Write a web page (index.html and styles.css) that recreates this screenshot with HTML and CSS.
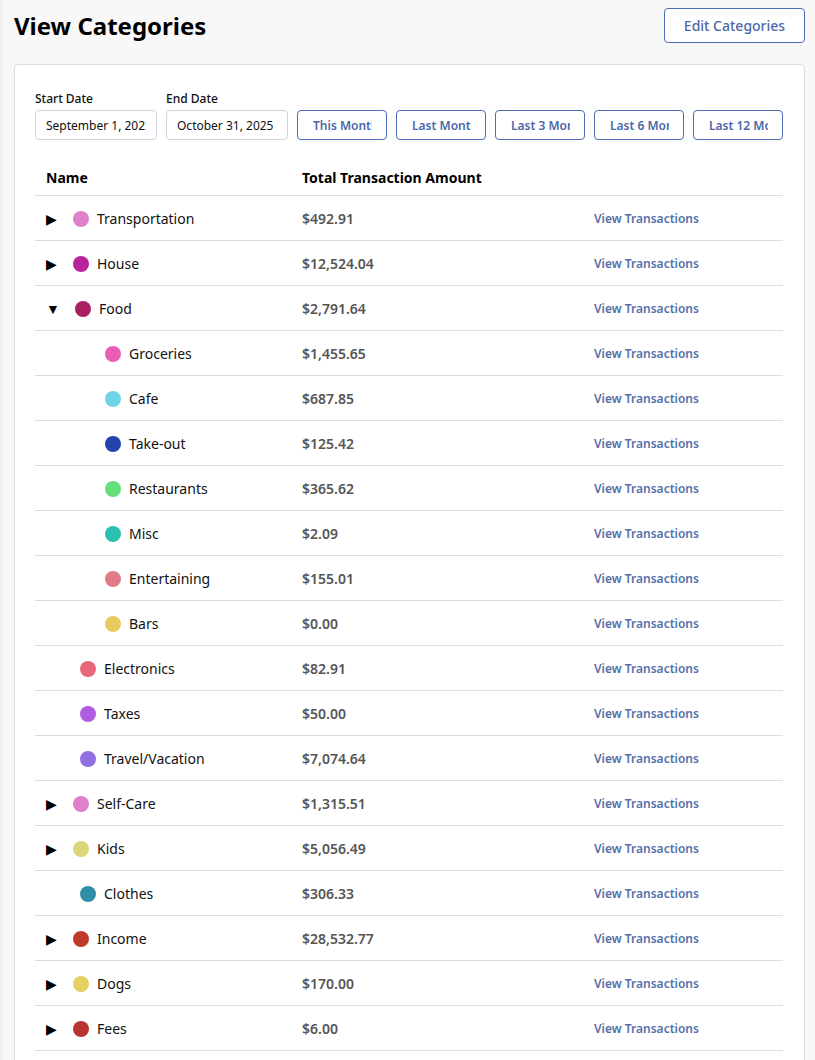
FILE: index.html
```html
<!DOCTYPE html>
<html lang="en">
<head>
<meta charset="utf-8">
<title>View Categories</title>
<link rel="stylesheet" href="styles.css">
</head>
<body>
<div class="page">
  <header class="page-header">
    <h1 class="title">View Categories</h1>
    <button class="btn-outline edit-btn">Edit Categories</button>
  </header>

  <section class="card">
    <div class="controls">
      <label class="field">
        <span class="field-label">Start Date</span>
        <input class="date-input" type="text" value="September 1, 2025">
      </label>
      <label class="field">
        <span class="field-label">End Date</span>
        <input class="date-input" type="text" value="October 31, 2025">
      </label>
      <button class="btn-outline range-btn"><span class="btn-text">This Month</span></button>
      <button class="btn-outline range-btn"><span class="btn-text">Last Month</span></button>
      <button class="btn-outline range-btn"><span class="btn-text">Last 3 Months</span></button>
      <button class="btn-outline range-btn"><span class="btn-text">Last 6 Months</span></button>
      <button class="btn-outline range-btn"><span class="btn-text">Last 12 Months</span></button>
    </div>

    <table class="cat-table">
      <colgroup>
        <col class="col-name">
        <col class="col-amount">
        <col class="col-action">
      </colgroup>
      <thead>
        <tr>
          <th>Name</th>
          <th>Total Transaction Amount</th>
          <th></th>
        </tr>
      </thead>
      <tbody>
        <tr><td><div class="name lvl-arrow"><span class="toggle">▶</span><span class="dot" style="background:#e07fcb"></span>Transportation</div></td><td class="amount">$492.91</td><td class="action"><a class="link">View Transactions</a></td></tr>
        <tr><td><div class="name lvl-arrow"><span class="toggle">▶</span><span class="dot" style="background:#b8249e"></span>House</div></td><td class="amount">$12,524.04</td><td class="action"><a class="link">View Transactions</a></td></tr>
        <tr><td><div class="name lvl-arrow"><span class="toggle open">▼</span><span class="dot" style="background:#a92060"></span>Food</div></td><td class="amount">$2,791.64</td><td class="action"><a class="link">View Transactions</a></td></tr>
        <tr><td><div class="name lvl-child"><span class="dot" style="background:#e85eb5"></span>Groceries</div></td><td class="amount">$1,455.65</td><td class="action"><a class="link">View Transactions</a></td></tr>
        <tr><td><div class="name lvl-child"><span class="dot" style="background:#6dd5e6"></span>Cafe</div></td><td class="amount">$687.85</td><td class="action"><a class="link">View Transactions</a></td></tr>
        <tr><td><div class="name lvl-child"><span class="dot" style="background:#2543a8"></span>Take-out</div></td><td class="amount">$125.42</td><td class="action"><a class="link">View Transactions</a></td></tr>
        <tr><td><div class="name lvl-child"><span class="dot" style="background:#64e07a"></span>Restaurants</div></td><td class="amount">$365.62</td><td class="action"><a class="link">View Transactions</a></td></tr>
        <tr><td><div class="name lvl-child"><span class="dot" style="background:#2bbfb0"></span>Misc</div></td><td class="amount">$2.09</td><td class="action"><a class="link">View Transactions</a></td></tr>
        <tr><td><div class="name lvl-child"><span class="dot" style="background:#e07c8a"></span>Entertaining</div></td><td class="amount">$155.01</td><td class="action"><a class="link">View Transactions</a></td></tr>
        <tr><td><div class="name lvl-child"><span class="dot" style="background:#e6cc5e"></span>Bars</div></td><td class="amount">$0.00</td><td class="action"><a class="link">View Transactions</a></td></tr>
        <tr><td><div class="name lvl-leaf"><span class="dot" style="background:#e8687a"></span>Electronics</div></td><td class="amount">$82.91</td><td class="action"><a class="link">View Transactions</a></td></tr>
        <tr><td><div class="name lvl-leaf"><span class="dot" style="background:#b05ce0"></span>Taxes</div></td><td class="amount">$50.00</td><td class="action"><a class="link">View Transactions</a></td></tr>
        <tr><td><div class="name lvl-leaf"><span class="dot" style="background:#9070e0"></span>Travel/Vacation</div></td><td class="amount">$7,074.64</td><td class="action"><a class="link">View Transactions</a></td></tr>
        <tr><td><div class="name lvl-arrow"><span class="toggle">▶</span><span class="dot" style="background:#e07fcb"></span>Self-Care</div></td><td class="amount">$1,315.51</td><td class="action"><a class="link">View Transactions</a></td></tr>
        <tr><td><div class="name lvl-arrow"><span class="toggle">▶</span><span class="dot" style="background:#dcd67a"></span>Kids</div></td><td class="amount">$5,056.49</td><td class="action"><a class="link">View Transactions</a></td></tr>
        <tr><td><div class="name lvl-leaf"><span class="dot" style="background:#2f8fa8"></span>Clothes</div></td><td class="amount">$306.33</td><td class="action"><a class="link">View Transactions</a></td></tr>
        <tr><td><div class="name lvl-arrow"><span class="toggle">▶</span><span class="dot" style="background:#c03a2a"></span>Income</div></td><td class="amount">$28,532.77</td><td class="action"><a class="link">View Transactions</a></td></tr>
        <tr><td><div class="name lvl-arrow"><span class="toggle">▶</span><span class="dot" style="background:#e6d060"></span>Dogs</div></td><td class="amount">$170.00</td><td class="action"><a class="link">View Transactions</a></td></tr>
        <tr><td><div class="name lvl-arrow"><span class="toggle">▶</span><span class="dot" style="background:#b83232"></span>Fees</div></td><td class="amount">$6.00</td><td class="action"><a class="link">View Transactions</a></td></tr>
        <tr><td><div class="name lvl-arrow"><span class="toggle">▶</span><span class="dot" style="background:#7a7a7a"></span>Other</div></td><td class="amount">$0.00</td><td class="action"><a class="link">View Transactions</a></td></tr>
      </tbody>
    </table>
  </section>
</div>
</body>
</html>
```

FILE: styles.css
```css
* { box-sizing: border-box; }

html, body {
  margin: 0;
  padding: 0;
}

body {
  background: #f8f8f8;
  font-family: "Noto Sans", "Open Sans", sans-serif;
  color: #111;
  box-shadow: inset 5px 0 5px -3px rgba(0, 0, 0, 0.06);
  min-height: 100vh;
}

.page {
  padding: 8px 10px 40px 14px;
}

.page-header {
  display: flex;
  justify-content: space-between;
  align-items: center;
  height: 35px;
}

.title {
  margin: 0;
  font-size: 24px;
  font-weight: 700;
  color: #000;
  line-height: 1;
}

.btn-outline {
  font-family: inherit;
  background: #fff;
  border: 1px solid #4d6db5;
  border-radius: 4px;
  color: #4a68a8;
  cursor: pointer;
}

.edit-btn {
  height: 35px;
  width: 141px;
  font-size: 14px;
  font-weight: 500;
  padding: 0 12px;
}

.card {
  margin-top: 21px;
  background: #fff;
  border: 1px solid #dcdee4;
  border-radius: 4px;
  padding: 26px 21px 0 20px;
}

.controls {
  display: flex;
  align-items: flex-end;
  gap: 9px;
}

.field {
  display: flex;
  flex-direction: column;
  gap: 3px;
}

.field-label {
  font-size: 12px;
  line-height: 16px;
  font-weight: 500;
  color: #111;
}

.date-input {
  width: 122px;
  height: 30px;
  border: 1px solid #cfd2d8;
  border-radius: 4px;
  padding: 0 10px;
  font-family: inherit;
  font-size: 12px;
  color: #111;
  background: #fff;
}

.range-btn {
  flex: 1;
  min-width: 0;
  height: 30px;
  font-size: 12px;
  font-weight: 600;
  padding: 0 14px 0 15px;
  text-align: left;
  display: flex;
  align-items: center;
}

.btn-text {
  display: block;
  width: 100%;
  white-space: nowrap;
  overflow: hidden;
  text-overflow: clip;
}

.cat-table {
  width: 100%;
  margin-top: 20px;
  border-collapse: collapse;
  table-layout: fixed;
}

.col-name { width: 256px; }
.col-amount { width: 292px; }

.cat-table th {
  text-align: left;
  font-size: 14px;
  font-weight: 700;
  color: #000;
  height: 35px;
  padding: 0 11px;
  border-bottom: 1px solid #dcdde2;
  vertical-align: middle;
}

.cat-table td {
  height: 45px;
  padding: 2px 11px 0;
  border-bottom: 1px solid #dcdde2;
  vertical-align: middle;
  font-size: 14px;
}

.cat-table td.action {
  padding: 0 11px 1px;
}

.name {
  display: flex;
  align-items: center;
  color: #111;
  font-size: 14px;
}

.toggle {
  display: inline-block;
  font-size: 14px;
  line-height: 1;
  width: 27px;
  color: #000;
}

.toggle.open { width: 29px; }

.lvl-leaf { padding-left: 34px; }
.lvl-child { padding-left: 59px; }

.dot {
  width: 16px;
  height: 16px;
  border-radius: 50%;
  margin-right: 8px;
  flex: none;
}

.amount {
  font-weight: 600;
  color: #555;
}

.link {
  font-size: 12px;
  font-weight: 600;
  color: #5570a8;
  cursor: pointer;
}
```
